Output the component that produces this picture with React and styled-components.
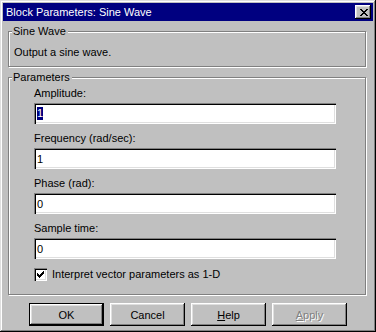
import React from 'react';
import styled, { createGlobalStyle } from 'styled-components';

const GlobalStyle = createGlobalStyle`
  html, body {
    margin: 0;
    padding: 0;
    background: #c0c0c0;
  }
  body {
    font-family: "Liberation Sans", Arial, sans-serif;
    font-size: 11px;
    color: #000;
  }
`;

const FIELDS = [
  { label: 'Amplitude:', value: '1', selected: true },
  { label: 'Frequency (rad/sec):', value: '1' },
  { label: 'Phase (rad):', value: '0' },
  { label: 'Sample time:', value: '0' },
];

// pixel art for the close glyph and the check mark
const CLOSE_PIXELS = [
  'XX....XX',
  '.XX..XX.',
  '..XXXX..',
  '...XX...',
  '..XXXX..',
  '.XX..XX.',
  'XX....XX',
];

const CHECK_PIXELS = [
  '......X',
  '.....XX',
  'X...XXX',
  'XX.XXX.',
  'XXXXX..',
  '.XXX...',
  '..X....',
];

function PixelIcon({ rows }) {
  const w = rows[0].length;
  const h = rows.length;
  return (
    <svg width={w} height={h} viewBox={`0 0 ${w} ${h}`} shapeRendering="crispEdges">
      {rows.map((row, y) =>
        row.split('').map((c, x) =>
          c === 'X' ? <rect key={`${x}-${y}`} x={x} y={y} width="1" height="1" fill="#000" /> : null
        )
      )}
    </svg>
  );
}

export default function App() {
  return (
    <>
      <GlobalStyle />
      <Window>
        <TitleBar>
          <Title>Block Parameters: Sine Wave</Title>
          <CloseButton>
            <PixelIcon rows={CLOSE_PIXELS} />
          </CloseButton>
        </TitleBar>
        <Body>
          <GroupBox $pad="13px 5px 7px 5px">
            <GroupLabel>Sine Wave</GroupLabel>
            <Description>Output a sine wave.</Description>
          </GroupBox>
          <GroupBox $pad="8px 0 13px 25px">
            <GroupLabel>Parameters</GroupLabel>
            <FieldList>
              {FIELDS.map((f) => (
                <Field key={f.label}>
                  <FieldLabel>{f.label}</FieldLabel>
                  <TextBox>
                    {f.selected ? <Selected>{f.value}</Selected> : f.value}
                  </TextBox>
                </Field>
              ))}
              <CheckRow>
                <CheckBox>
                  <PixelIcon rows={CHECK_PIXELS} />
                </CheckBox>
                <span>Interpret vector parameters as 1-D</span>
              </CheckRow>
            </FieldList>
          </GroupBox>
          <ButtonRow>
            <Button $default>OK</Button>
            <Button>Cancel</Button>
            <Button>
              <u>H</u>elp
            </Button>
            <Button $disabled>
              <u>A</u>pply
            </Button>
          </ButtonRow>
        </Body>
      </Window>
    </>
  );
}

const Window = styled.div`
  width: 376px;
  height: 332px;
  box-sizing: border-box;
  padding: 3px;
  background: #c0c0c0;
  box-shadow: inset -1px -1px #000, inset 1px 1px #dfdfdf,
    inset -2px -2px #808080, inset 2px 2px #fff;
  display: flex;
  flex-direction: column;
`;

const TitleBar = styled.div`
  height: 18px;
  background: #000080;
  color: #fff;
  display: flex;
  align-items: center;
  justify-content: space-between;
  padding: 0 2px 0 3px;
`;

const Title = styled.span`
  font-size: 11px;
  line-height: 14px;
`;

const CloseButton = styled.div`
  width: 16px;
  height: 14px;
  box-sizing: border-box;
  background: #c0c0c0;
  display: flex;
  align-items: center;
  justify-content: center;
  padding-left: 1px;
  box-shadow: inset -1px -1px #000, inset 1px 1px #fff,
    inset -2px -2px #808080, inset 2px 2px #dfdfdf;
`;

const Body = styled.div`
  display: flex;
  flex-direction: column;
  gap: 10px;
  padding: 10px 7px 0 5px;
`;

const GroupBox = styled.div`
  position: relative;
  padding: ${(p) => p.$pad};
  border: 1px solid #808080;
  box-shadow: inset 1px 1px #fff, 1px 1px #fff;
`;

const GroupLabel = styled.span`
  position: absolute;
  top: -7px;
  left: 3px;
  padding: 0 2px 0 1px;
  line-height: 13px;
  background: #c0c0c0;
`;

const Description = styled.div`
  line-height: 14px;
`;

const FieldList = styled.div`
  display: flex;
  flex-direction: column;
  gap: 7px;
`;

const Field = styled.div`
  display: flex;
  flex-direction: column;
  gap: 3px;
`;

const FieldLabel = styled.div`
  line-height: 14px;
`;

const TextBox = styled.div`
  height: 21px;
  box-sizing: border-box;
  width: 302px;
  background: #fff;
  color: #000;
  padding: 0 3px;
  display: flex;
  align-items: center;
  box-shadow: inset 1px 1px #808080, inset 2px 2px #000,
    inset -1px -1px #fff, inset -2px -2px #dfdfdf;
`;

const Selected = styled.span`
  background: #000080;
  color: #fff;
  line-height: 13px;
`;

const CheckRow = styled.div`
  display: flex;
  align-items: center;
  gap: 5px;
  margin-top: 1px;
  height: 14px;
`;

const CheckBox = styled.div`
  width: 13px;
  height: 13px;
  box-sizing: border-box;
  background: #fff;
  display: flex;
  align-items: center;
  justify-content: center;
  box-shadow: inset 1px 1px #808080, inset 2px 2px #000,
    inset -1px -1px #fff, inset -2px -2px #dfdfdf;
`;

const ButtonRow = styled.div`
  display: flex;
  justify-content: center;
  gap: 6px;
  margin-top: -2px;
  margin-left: 2px;
`;

const Button = styled.div`
  width: 75px;
  height: 23px;
  box-sizing: border-box;
  display: flex;
  align-items: center;
  justify-content: center;
  background: #c0c0c0;
  color: ${(p) => (p.$disabled ? '#808080' : '#000')};
  text-shadow: ${(p) => (p.$disabled ? '1px 1px #fff' : 'none')};
  border: ${(p) => (p.$default ? '1px solid #000' : 'none')};
  box-shadow: inset -1px -1px #000, inset 1px 1px #fff,
    inset -2px -2px #808080, inset 2px 2px #dfdfdf;
`;
